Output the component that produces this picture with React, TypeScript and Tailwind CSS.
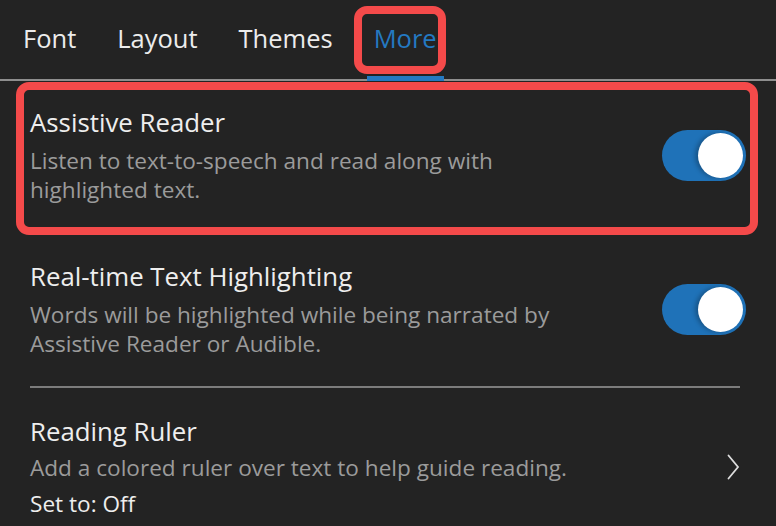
import React from "react";

function Toggle() {
  return (
    <div className="w-[84px] h-[51px] rounded-full bg-[#1f72b8] flex items-center justify-end pr-[3px] shrink-0">
      <div className="w-[45px] h-[45px] rounded-full bg-white shadow-[-3px_0_4px_rgba(0,0,0,0.25)]" />
    </div>
  );
}

function Row({
  title,
  desc,
  right,
  extra,
  className,
  descClass,
}: {
  title: string;
  desc: string[];
  right: React.ReactNode;
  extra?: string;
  className?: string;
  descClass?: string;
}) {
  return (
    <div className={"flex items-center justify-between px-[30px] " + (className ?? "")}>
      <div className="flex flex-col">
        <div className="text-[25.8px] leading-[30px] text-[#eeeeee]">{title}</div>
        <div className={"text-[22.6px] leading-[29px] text-[#9b9b9b] " + (descClass ?? "mt-[9px]")}>
          {desc.map((d, i) => (
            <div key={i}>{d}</div>
          ))}
        </div>
        {extra && (
          <div className="mt-[7px] text-[22.6px] leading-[29px] text-[#eeeeee]">{extra}</div>
        )}
      </div>
      {right}
    </div>
  );
}

export default function App() {
  const tabs = ["Font", "Layout", "Themes", "More"];
  return (
    <div
      className="relative w-[776px] h-[526px] overflow-hidden bg-[#232323]"
      style={{ fontFamily: '"Open Sans", "Noto Sans", sans-serif' }}
    >
      <nav className="flex h-[81px] items-stretch gap-[27px] pl-[16px] border-b-2 border-[#8e8e8e]">
        {tabs.map((t) => (
          <div
            key={t}
            className={
              "relative flex items-center px-[7px] pb-[2px] text-[25.5px] " +
              (t === "More" ? "text-[#2479c1]" : "text-[#ececec]")
            }
          >
            {t}
            {t === "More" && (
              <div className="absolute left-0 right-0 bottom-[-2px] h-[5px] bg-[#2479c1]" />
            )}
          </div>
        ))}
      </nav>

      <div className="flex flex-col">
        <Row
          className="pt-[26px] pb-[29px]"
          title="Assistive Reader"
          desc={["Listen to text-to-speech and read along with", "highlighted text."]}
          right={<Toggle />}
        />
        <Row
          className="pt-[28px] pb-[28px]"
          title="Real-time Text Highlighting"
          desc={["Words will be highlighted while being narrated by", "Assistive Reader or Audible."]}
          right={<Toggle />}
        />
        <div className="ml-[30px] mr-[36px] h-[2px] bg-[#7c7c7c]" />
        <Row
          className="pt-[28px]"
          descClass="mt-[7px]"
          title="Reading Ruler"
          desc={["Add a colored ruler over text to help guide reading."]}
          extra="Set to: Off"
          right={
            <svg width="13" height="26" viewBox="0 0 13 26" className="mr-[6px]">
              <polyline
                points="1.5,1.5 11,13 1.5,24.5"
                fill="none"
                stroke="#dddddd"
                strokeWidth="1.8"
                strokeLinecap="round"
                strokeLinejoin="miter"
              />
            </svg>
          }
        />
      </div>

      {/* annotation highlight boxes */}
      <div className="absolute left-[354px] top-[6px] w-[92px] h-[68px] border-[8px] border-[#f44a4a] rounded-[13px]" />
      <div className="absolute left-[16px] top-[82px] w-[742px] h-[153px] border-[8px] border-[#f44a4a] rounded-[13px]" />
    </div>
  );
}
